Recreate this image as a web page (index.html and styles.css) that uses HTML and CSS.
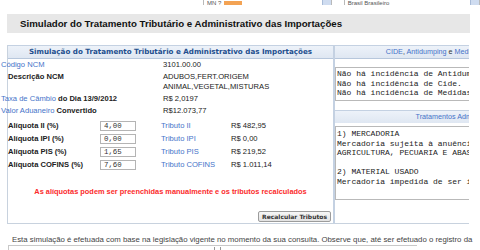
FILE: index.html
```html
<!DOCTYPE html>
<html lang="pt-BR">
<head>
  <meta charset="UTF-8">
  <meta name="viewport" content="width=device-width, initial-scale=1.0">
  <title>Simulador do Tratamento Tributário e Administrativo das Importações</title>
  <link rel="stylesheet" href="styles.css">
</head>
<body>
  <div class="top-selects">
    <span class="sel sel-ncm"><span class="sel-text">MN ?</span><span class="sel-tag"></span><span class="sel-btn"></span></span>
    <span class="sel sel-pais"><span class="sel-text">Brasil Brasileiro</span><span class="sel-btn"></span></span>
  </div>

  <h1 class="page-title">Simulador do Tratamento Tributário e Administrativo das Importações</h1>

  <div class="sim">
    <div class="panel panel-main">
      <div class="panel-head">Simulação do Tratamento Tributário e Administrativo das Importações</div>

      <div class="info">
        <div class="info-label"><a href="#" class="lnk lnk-out">Código NCM</a></div>
        <div class="info-value">3101.00.00</div>
        <div class="info-label"><b>Descrição NCM</b></div>
        <div class="info-value">ADUBOS,FERT.ORIGEM<br>ANIMAL,VEGETAL,MISTURAS</div>
        <div class="info-label"><a href="#" class="lnk lnk-out">Taxa de Câmbio</a> <b>do Dia 13/9/2012</b></div>
        <div class="info-value">R$ 2,0197</div>
        <div class="info-label"><a href="#" class="lnk lnk-out">Valor Aduaneiro</a> <b>Convertido</b></div>
        <div class="info-value">R$12.073,77</div>
      </div>

      <div class="rates">
        <b>Alíquota II (%)</b>
        <input class="rate-input" type="text" value="4,00">
        <a href="#" class="lnk">Tributo II</a>
        <span>R$ 482,95</span>

        <b>Alíquota IPI (%)</b>
        <input class="rate-input" type="text" value="0,00">
        <a href="#" class="lnk">Tributo IPI</a>
        <span>R$ 0,00</span>

        <b>Alíquota PIS (%)</b>
        <input class="rate-input" type="text" value="1,65">
        <a href="#" class="lnk">Tributo PIS</a>
        <span>R$ 219,52</span>

        <b>Alíquota COFINS (%)</b>
        <input class="rate-input" type="text" value="7,60">
        <a href="#" class="lnk">Tributo COFINS</a>
        <span>R$ 1.011,14</span>
      </div>

      <p class="warn">As alíquotas podem ser preenchidas manualmente e os tributos recalculados</p>

      <div class="actions">
        <button type="button" class="btn">Recalcular Tributos</button>
      </div>
    </div>

    <div class="panel panel-side">
      <div class="panel-head head-right"><a href="#" class="lnk">CIDE</a>, <a href="#" class="lnk">Antidumping</a> e <a href="#" class="lnk">Medidas Compensatórias</a></div>
      <div class="mono-box box-cide">Não há incidência de Antidumping.
Não há incidência de Cide.
Não há incidência de Medidas Compensatórias.</div>

      <div class="panel-head head-right head-sub"><a href="#" class="lnk">Tratamentos Administrativos</a></div>
      <div class="mono-box box-trat">1) MERCADORIA
Mercadoria sujeita à anuência do MINISTERIO DA
AGRICULTURA, PECUARIA E ABASTECIMENTO

2) MATERIAL USADO
Mercadoria impedida de ser importada usada</div>
    </div>
  </div>

  <p class="note">Esta simulação é efetuada com base na legislação vigente no momento da sua consulta. Observe que, até ser efetuado o registro da</p>
  <div class="hscroll"><span class="grip"></span></div>
</body>
</html>
```

FILE: styles.css
```css
body { margin: 0; font-family: "Liberation Sans", Arial, sans-serif; font-size: 7.6px; color: #222; background: #fff; overflow: hidden; }

/* barra de selects no topo (cortada) */
.top-selects { height: 5px; overflow: hidden; display: flex; padding-left: 203px; gap: 12px; }
.sel { display: flex; align-items: flex-end; height: 14px; margin-top: -9px; border: 1px solid #b9b9b9; border-radius: 2px; background: #fff; font-size: 6px; color: #555; }
.sel-ncm { width: 132px; }
.sel-pais { width: 140px; }
.sel-text { padding: 0 0 0 3px; line-height: 6px; }
.sel-tag { width: 18px; height: 5px; margin-left: 3px; background: #f3a354; }
.sel-btn { margin-left: auto; width: 8px; height: 12px; background: #cfdcf0; border-left: 1px solid #a9bcd8; }

.page-title { margin: 9px 10px 0 7px; padding: 0 13px; height: 19px; line-height: 19px; background: #e7e7e7; font-size: 9.7px; font-weight: bold; color: #111; white-space: nowrap; }

.sim { display: flex; width: 462px; margin-top: 12px; padding-left: 7px; overflow: hidden; clip-path: inset(0); }
.panel { flex: none; display: flex; flex-direction: column; }
.panel-main { width: 325px; height: 178px; border-left: 1px solid #c8d2de; border-bottom: 1px solid #c8d2de; border-right: 1px solid #c4d1e2; }
.panel-side { width: 205px; height: 178px; border-left: 1px solid #c4d1e2; border-bottom: 1px solid #c8d2de; }

.panel-head { height: 12px; line-height: 12px; border-top: 1px solid #c4d1e2; border-bottom: 1px solid #b7c7dc; background: linear-gradient(#edf2f9, #dfe7f2); text-align: center; font-family: "DejaVu Sans", Tahoma, sans-serif; font-size: 7.15px; font-weight: bold; color: #234f8e; white-space: nowrap; }
.head-right { text-align: right; padding-right: 4px; font-family: "Liberation Sans", Arial, sans-serif; font-weight: normal; font-size: 7.2px; color: #333; }
.head-sub { margin-top: 9px; padding-right: 34px; border-bottom: none; }

.lnk { color: #4573c9; text-decoration: none; }
.lnk-out { margin-left: -7px; }

.info { display: grid; grid-template-columns: 155px 1fr; }
.info > div { padding: 0.75px 0; line-height: 10.5px; white-space: nowrap; }
.info-value { color: #222; }

.rates { display: grid; grid-template-columns: 92px 61px 70px 1fr; grid-auto-rows: 13px; align-items: center; margin-top: 1.5px; white-space: nowrap; }
.rate-input { width: 36px; height: 10px; box-sizing: border-box; border: 1px solid #b4b4b4; padding: 0 3px; font-family: "Liberation Mono", "Courier New", monospace; font-size: 7.4px; color: #333; }

.warn { margin: 16px 0 0; text-align: center; color: #fb2b2b; font-weight: bold; font-size: 7.4px; }

.actions { margin-top: auto; display: flex; justify-content: flex-end; padding: 0 2px 1px 0; }
.btn { height: 11px; padding: 0 3px; border: 1px solid #9c9c9c; border-radius: 2px; background: linear-gradient(#f7f7f7, #e2e2e2); font-family: "DejaVu Sans", Tahoma, sans-serif; font-size: 6px; font-weight: bold; color: #333; line-height: 9px; }

.mono-box { border: 1px solid #b9b9b9; background: #fff; padding: 1px 1px; font-family: "Liberation Mono", "Courier New", monospace; font-size: 8px; line-height: 9.6px; white-space: pre; color: #222; overflow: hidden; }
.box-cide { margin-top: 8px; height: 30px; }
.box-trat { margin-top: 3px; height: 69px; padding-top: 2px; }

.note { margin: 11px 0 0 12px; font-size: 7.8px; color: #444; white-space: nowrap; }
.hscroll { position: relative; margin: 1px 63px 0 8px; height: 6px; border-top: 1px solid #c8c8c8; border-left: 1px solid #c8c8c8; }
.grip { position: absolute; left: 205px; top: 1px; width: 5px; height: 2px; border-left: 1px dotted #999; border-right: 1px dotted #999; }
```
